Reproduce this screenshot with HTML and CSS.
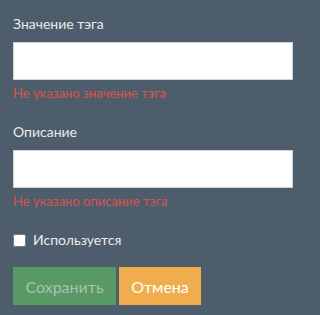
FILE: index.html
```html
<!DOCTYPE html>
<html>
<head>
<meta charset="utf-8">
<link rel="stylesheet" href="styles.css">
</head>
<body>
<form class="tag-form">
	<div class="field">
		<label class="field-label" for="value">Значение тэга</label>
		<input class="field-input" id="value" type="text">
		<div class="field-error">Не указано значение тэга</div>
	</div>
	<div class="field">
		<label class="field-label" for="descr">Описание</label>
		<input class="field-input" id="descr" type="text">
		<div class="field-error">Не указано описание тэга</div>
	</div>
	<label class="check">
		<input class="check-box" type="checkbox">
		<span>Используется</span>
	</label>
	<div class="actions">
		<button class="btn btn-save" type="submit" disabled>Сохранить</button>
		<button class="btn btn-cancel" type="button">Отмена</button>
	</div>
</form>
</body>
</html>
```
FILE: styles.css
```css
html, body{
	margin: 0;
	background-color: #4e5d6c;
}
body{
	font-family: Lato, "Liberation Sans", sans-serif;
	color: #ebebeb;
}
.tag-form{
	padding: 14px 27px 0 13px;
}
.field{
	margin-bottom: 20px;
}
.field-label{
	display: block;
	font-size: 14px;
	line-height: 20px;
	margin-bottom: 8px;
}
.field-input{
	display: block;
	box-sizing: border-box;
	width: 280px;
	height: 38px;
	margin: 0;
	border: 1px solid #cfd4d9;
	background-color: #fff;
}
.field-error{
	margin-top: 4px;
	font-size: 13px;
	line-height: 18px;
	color: #d9534f;
}
.check{
	display: flex;
	align-items: center;
	font-size: 14px;
	line-height: 20px;
	height: 20px;
}
.check-box{
	width: 13px;
	height: 13px;
	margin: 0 7px 0 0;
}
.actions{
	display: flex;
	gap: 3px;
	margin-top: 17px;
}
.btn{
	height: 38px;
	border: 0;
	border-radius: 0;
	padding: 0 8px;
	font-family: inherit;
	font-size: 16px;
	font-weight: 400;
}
.btn-save{
	width: 103px;
	background-color: #589966;
	color: #a9c4ae;
}
.btn-cancel{
	width: 82px;
	background-color: #f0ad4e;
	color: #fff;
}
```
